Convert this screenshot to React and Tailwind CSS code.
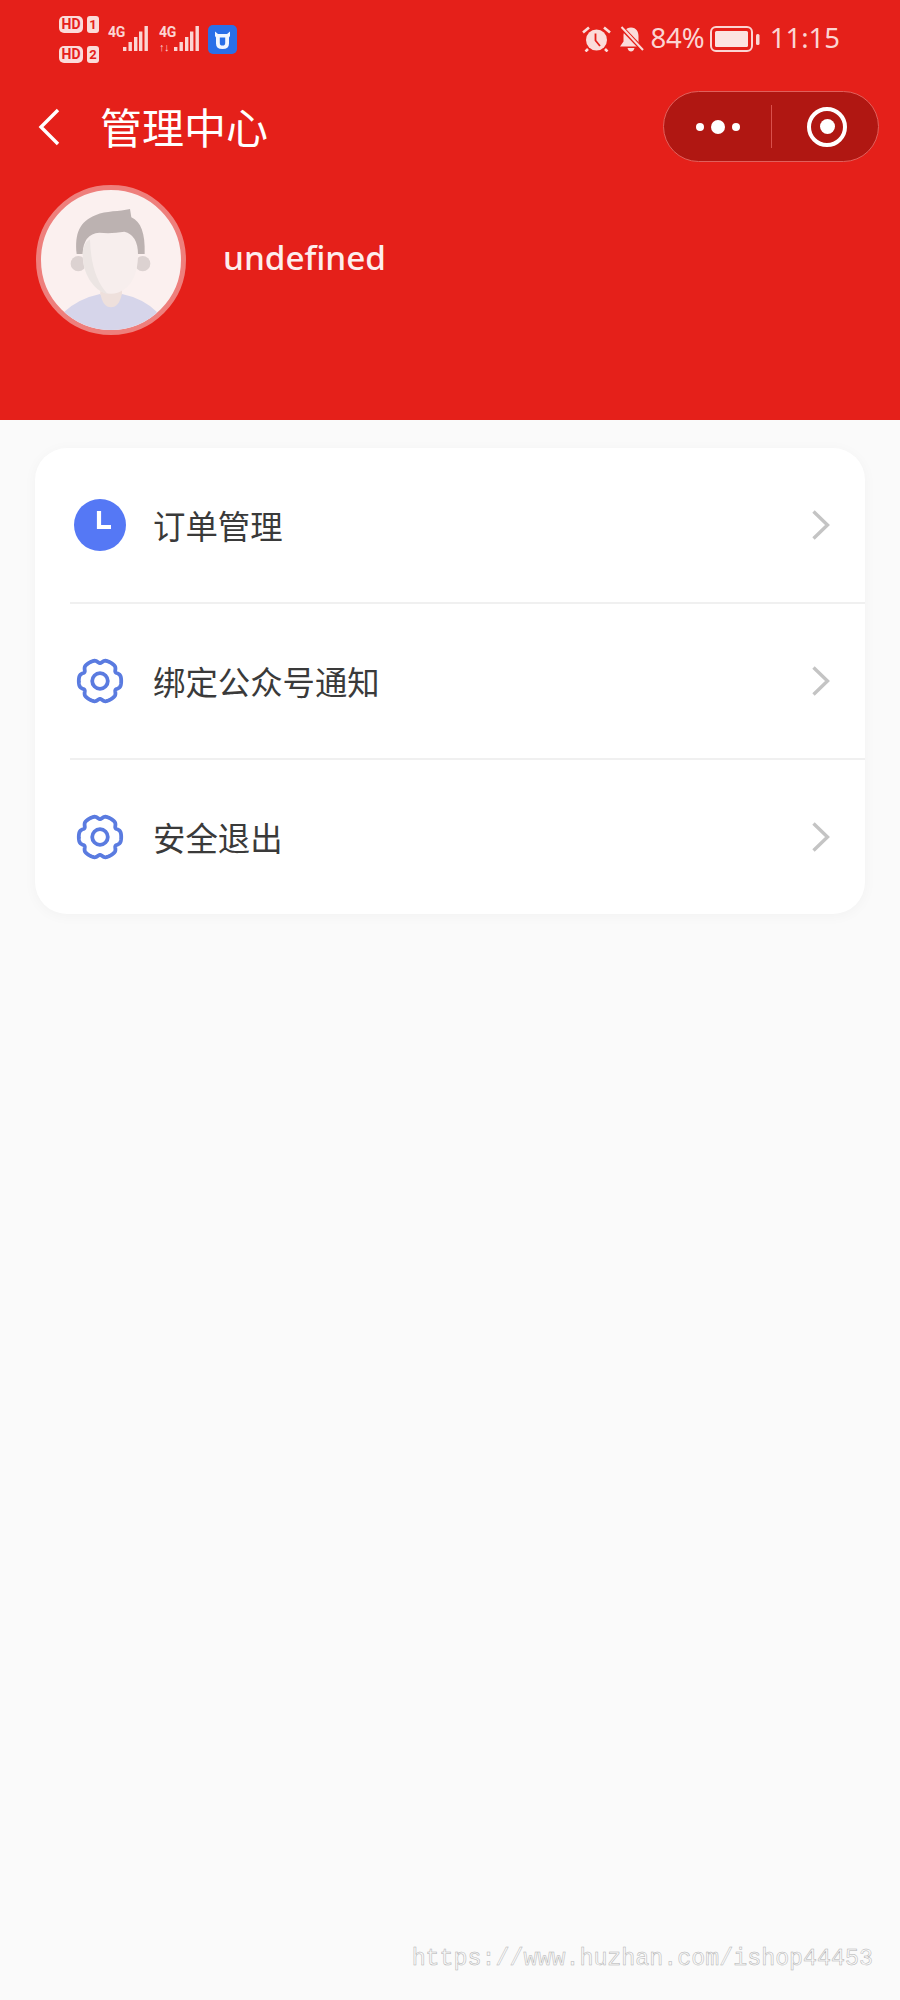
import React from 'react';

const gearPath = Array.from({ length: 144 }, (_, i) => {
  const a = (i / 144) * Math.PI * 2;
  const r = 21.2 - 3.4 * Math.pow((1 - Math.cos(6 * a)) / 2, 4);
  return `${i === 0 ? 'M' : 'L'}${(24 + r * Math.cos(a)).toFixed(2)} ${(24 + r * Math.sin(a)).toFixed(2)}`;
}).join(' ') + ' Z';

function HdRow({ n }) {
  return (
    <div className="flex items-center gap-[4px] h-[17px]">
      <span className="w-[24px] h-[17px] rounded-[5px] bg-[#fbdcda] text-[#e5201a] text-[14px] font-bold leading-[17px] text-center [font-family:Roboto,sans-serif]">HD</span>
      <span className="w-[12px] h-[17px] rounded-[3px] bg-[#fbdcda] text-[#e5201a] text-[13px] font-bold leading-[17px] text-center [font-family:Roboto,sans-serif]">{n}</span>
    </div>
  );
}

function Signal({ arrows }) {
  return (
    <div className="flex flex-col relative w-[41px] h-[26px]">
      <span className="absolute left-0 top-[0px] text-[14px] font-bold leading-[12px] tracking-tight text-[#fbd5d3] [font-family:Roboto,sans-serif]">4G</span>
      {arrows && <span className="absolute left-0 bottom-0 text-[11px] font-bold leading-[10px] tracking-tighter text-[#fbd5d3]">↑↓</span>}
      <svg className="absolute left-0 top-0" width="41" height="26" viewBox="0 0 41 26" fill="#fbd5d3">
        <rect x="15" y="21" width="3.4" height="4" />
        <rect x="20.5" y="16" width="3.4" height="9" />
        <rect x="26" y="11" width="3.4" height="14" />
        <rect x="31" y="5.5" width="3.4" height="19.5" />
        <rect x="36.5" y="0" width="3.4" height="25" />
      </svg>
    </div>
  );
}

function AppBadge() {
  return (
    <svg width="29" height="29" viewBox="0 0 29 29">
      <rect width="29" height="29" rx="5" fill="#2a6fe8" />
      <path d="M7 6.5 L10 9 H19 L22 6.5 V11 L21 12.5 V18.5 Q21 24 14.5 24 Q8 24 8 18.5 V12.5 L7 11 Z" fill="#f2f6ff" />
      <path d="M11.8 12.5 H17.2 V18 Q17.2 20.6 14.5 20.6 Q11.8 20.6 11.8 18 Z" fill="#2a6fe8" />
    </svg>
  );
}

function AlarmIcon() {
  return (
    <svg width="29" height="26" viewBox="0 0 29 26" fill="none">
      <circle cx="14.5" cy="14" r="10.5" fill="#fbdcda" />
      <path d="M13.5 7.5 V14.5 L18 20" stroke="#e5201a" strokeWidth="1.8" />
      <path d="M1 6.5 L7 1.5 M28 6.5 L22 1.5 M6 23 L3.5 25.5 M23 23 L25.5 25.5" stroke="#fbdcda" strokeWidth="2.6" />
    </svg>
  );
}

function BellOffIcon() {
  return (
    <svg width="25" height="26" viewBox="0 0 25 26" fill="none">
      <path d="M12 1.5 C6.5 1.5 4.5 6 4.5 10 V15.5 L1 20.5 H21.5 L19.5 16 V10 C19.5 6 17.5 1.5 12 1.5 Z" fill="#fbdcda" />
      <path d="M8.5 22 H15.5 Q14.5 25.5 12 25.5 Q9.5 25.5 8.5 22 Z" fill="#fbdcda" />
      <path d="M2 1 L23 23" stroke="#e5201a" strokeWidth="4.5" />
      <path d="M2.5 1 L24 24" stroke="#fbdcda" strokeWidth="2" />
    </svg>
  );
}

function BatteryIcon() {
  return (
    <svg width="50" height="26" viewBox="0 0 50 26" fill="none">
      <rect x="1" y="1" width="41" height="24" rx="5" stroke="#fbd5d3" strokeWidth="2" />
      <rect x="5" y="5" width="33" height="16" rx="1.5" fill="#fce3e1" />
      <rect x="46" y="8" width="3.5" height="11" rx="1.5" fill="#fbd5d3" />
    </svg>
  );
}

function Avatar() {
  return (
    <div className="w-[150px] h-[150px] rounded-full border-[5px] border-[#ee7f7c] bg-[#fbf0ef] overflow-hidden shrink-0">
      <svg width="140" height="140" viewBox="125 330 420 420">
        <circle cx="237" cy="551" r="23" fill="#dcd2d1" />
        <circle cx="430" cy="551" r="23" fill="#dcd2d1" />
        <path d="M232 522 C226 460 240 425 290 405 C320 392 360 395 392 387 L396 412 C425 425 438 460 436 522 Z" fill="#bcb2b1" />
        <path d="M303 620 H368 V690 H303 Z" fill="#eee0dc" />
        <path d="M195 695 Q240 655 302 642 Q335 690 368 642 Q430 655 472 695 L472 760 H195 Z" fill="#d6d5ea" />
        <path d="M303 640 H368 Q360 682 335 682 Q310 682 303 640 Z" fill="#eee0dc" />
        <path d="M250 520 Q252 462 300 458 Q335 462 375 455 Q418 465 416 530 Q414 600 375 628 Q335 655 295 628 Q250 590 250 520 Z" fill="#f7eeed" />
        <path d="M272 478 Q250 490 250 525 Q252 590 295 628 Q312 640 325 642 Q275 590 272 478 Z" fill="#ece5e3" />
      </svg>
    </div>
  );
}

function MenuRow({ icon, label, last }) {
  return (
    <div className="ml-[35px]">
      <div className="flex items-center h-[154px] pl-[4px] pr-[34px]">
        <div className="w-[52px] h-[52px] flex items-center justify-center shrink-0">{icon}</div>
        <span className="ml-[27px] text-[32.4px] leading-none text-[#3a3a3a] [font-family:'Noto_Sans_CJK_SC',sans-serif]">{label}</span>
        <svg className="ml-auto" width="20" height="32" viewBox="0 0 20 32" fill="none">
          <path d="M2.5 2.5 L16.5 16 L2.5 29.5" stroke="#c4c4c4" strokeWidth="3.4" />
        </svg>
      </div>
      {!last && <div className="h-[2px] bg-[#f0f0f0]" />}
    </div>
  );
}

const ClockIcon = (
  <svg width="52" height="52" viewBox="0 0 52 52">
    <circle cx="26" cy="26" r="26" fill="#5578f5" />
    <path d="M25 12 V28 H37" stroke="#fff" strokeWidth="4.2" fill="none" />
  </svg>
);

const GearIcon = (
  <svg width="48" height="48" viewBox="0 0 48 48" fill="none" stroke="#5a7be0" strokeWidth="3.8" strokeLinejoin="round">
    <path d={gearPath} />
    <circle cx="24" cy="24" r="7.8" />
  </svg>
);

export default function App() {
  return (
    <div className="w-[900px] min-h-[2000px] flex flex-col bg-[#fafafa] [font-family:'Noto_Sans',sans-serif]">
      <header className="h-[420px] bg-[#e5201a] shrink-0">
        <div className="h-[91px] flex justify-between">
          <div className="flex pl-[59px] items-start">
            <div className="flex flex-col gap-[13px] pt-[16px] w-[49px]">
              <HdRow n="1" />
              <HdRow n="2" />
            </div>
            <div className="flex gap-[10px] pt-[26px]">
              <Signal />
              <Signal arrows />
            </div>
            <div className="ml-[8px] pt-[25px]"><AppBadge /></div>
          </div>
          <div className="flex items-start pt-[25px] pr-[60px] text-[#fbd5d3] text-[27.5px] leading-[28px]">
            <div className="mt-[1px]"><AlarmIcon /></div>
            <div className="ml-[8px] mt-[1px]"><BellOffIcon /></div>
            <span className="ml-[6px] mt-[-1px]">84%</span>
            <div className="ml-[5px] mt-[1px]"><BatteryIcon /></div>
            <span className="ml-[10px] mt-[-1px]">11:15</span>
          </div>
        </div>

        <div className="h-[71px] flex items-center pl-[38px] pr-[21px]">
          <svg width="22" height="38" viewBox="0 0 22 38" fill="none">
            <path d="M20 2 L3 19 L20 36" stroke="#fff" strokeWidth="3.4" />
          </svg>
          <h1 className="ml-[40px] -mt-[2px] text-[42px] leading-none font-normal text-white [font-family:'Noto_Sans_CJK_SC',sans-serif]">管理中心</h1>
          <div className="ml-auto w-[216px] h-[71px] rounded-full bg-[#b01712] border border-[#e0605c] flex items-center">
            <div className="w-[107px] flex items-center justify-center gap-[7px]">
              <span className="w-[8px] h-[8px] rounded-full bg-white" />
              <span className="w-[14px] h-[14px] rounded-full bg-white" />
              <span className="w-[8px] h-[8px] rounded-full bg-white" />
            </div>
            <div className="w-px h-[43px] bg-[#d9504c]" />
            <div className="flex-1 flex items-center justify-center pl-[4px]">
              <div className="w-[40px] h-[40px] rounded-full border-[4.5px] border-white flex items-center justify-center">
                <span className="w-[15px] h-[15px] rounded-full bg-white" />
              </div>
            </div>
          </div>
        </div>

        <div className="mt-[23px] pl-[36px] flex items-center">
          <Avatar />
          <span className="ml-[37px] -mt-[5px] text-[33.3px] leading-none font-medium text-[#fdeeee]">undefined</span>
        </div>
      </header>

      <main className="flex-1 flex flex-col">
        <section className="mt-[28px] mx-[35px] rounded-[32px] bg-white shadow-[0_2px_14px_rgba(0,0,0,0.035)]">
          <MenuRow icon={ClockIcon} label="订单管理" />
          <MenuRow icon={GearIcon} label="绑定公众号通知" />
          <MenuRow icon={GearIcon} label="安全退出" last />
        </section>
        <div className="mt-auto pb-[28px] pr-[27px] text-right text-[23.3px] leading-[26px] text-transparent [-webkit-text-stroke:0.5px_#b0b0b0] [font-family:'Liberation_Mono',monospace]">
          https://www.huzhan.com/ishop44453
        </div>
      </main>
    </div>
  );
}
